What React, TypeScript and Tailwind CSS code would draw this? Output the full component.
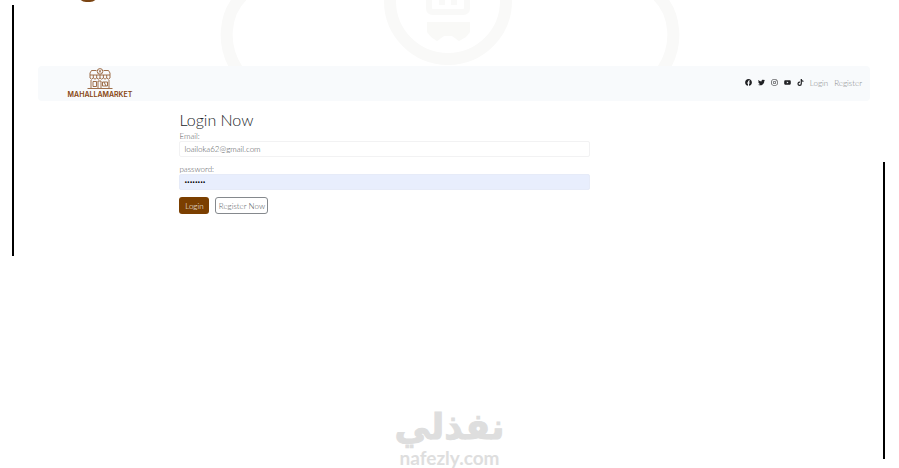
import { useState } from 'react';
import { FaFacebook, FaInstagram, FaTiktok, FaTwitter, FaYoutube } from 'react-icons/fa';

const socials = [
  { name: 'Facebook', icon: FaFacebook },
  { name: 'Twitter', icon: FaTwitter },
  { name: 'Instagram', icon: FaInstagram },
  { name: 'YouTube', icon: FaYoutube },
  { name: 'TikTok', icon: FaTiktok },
];

function StoreIcon() {
  return (
    <svg viewBox="0 0 26 22" className="h-[22px] w-[26px]" fill="none" stroke="#946038" strokeWidth="0.9">
      <path d="M9.5 2.5H4.5L3 5V7M16.5 2.5h5L23 5V7M3 7h20M3 7v3q1.6 2.4 3.3 0q1.7 2.4 3.4 0q1.6 2.4 3.3 0q1.7 2.4 3.4 0q1.6 2.4 3.3 0q1.7 2.4 3.3 0V7M6.3 7v3M9.7 7v3M13 7v3M16.4 7v3M19.7 7v3" />
      <circle cx="13" cy="3.4" r="2.8" />
      <path d="M12 2.2l2 2.4M14 2.2l-2 2.4" />
      <path d="M4 12v8M22 12v8M6 13.5h3.5v5H6zM11 20v-7h3v7M15.5 14h5v4h-5zM17 14l2 4M0.5 20.5h25" />
    </svg>
  );
}

function Backdrop() {
  return (
    <svg viewBox="0 0 460 66" className="h-[66px] w-[460px]" fill="none" stroke="#f9f9f8" aria-hidden="true">
      <path d="M24 -6C4 12 0 46 19 72M436 -6C456 12 460 46 441 72" strokeWidth="12" />
      <circle cx="228" cy="1" r="58" strokeWidth="12" />
      <path d="M209 -4V8q0 4 4 4h30q4 0 4-4V-4M222 -4v9M234 -4v9" strokeWidth="6" />
      <path d="M207 22h43v10l-4 5-7 4-7-5h-8l-7 5-6-4-4-5z" fill="#f9f9f7" stroke="none" />
    </svg>
  );
}

function Navbar() {
  return (
    <header className="flex h-[35px] items-center justify-between rounded bg-[#f8fafc] pr-2 pl-7">
      <a href="#" className="flex w-[68px] flex-col items-center">
        <StoreIcon />
        <span className="font-['Inter'] text-[7px] leading-[10px] font-semibold text-[#87450f]">MAHALLAMARKET</span>
      </a>
      <nav className="flex items-center gap-[6px] pb-[2px] text-[8px] text-[#85878a]">
        {socials.map(({ name, icon: Icon }) => (
          <a key={name} href="#" aria-label={name} className="flex w-[7px] justify-center text-[#202124]">
            <Icon className="size-[7px] shrink-0" />
          </a>
        ))}
        <a href="#">Login</a>
        <a href="#">Register</a>
      </nav>
    </header>
  );
}

function LoginForm() {
  const [email, setEmail] = useState('loailoka62@gmail.com');
  const [password, setPassword] = useState('password');

  return (
    <form className="mt-2 ml-[17%] w-1/2 max-w-[411px]" onSubmit={(e) => e.preventDefault()}>
      <h1 className="text-[16px] leading-[22px] text-[#212529]">Login Now</h1>
      <label htmlFor="email" className="block text-[8px] leading-[10px] text-[#55585b]">Email:</label>
      <input
        id="email"
        type="email"
        value={email}
        onChange={(e) => setEmail(e.target.value)}
        className="block h-4 w-full rounded-[2px] border border-[#f2f2f3] bg-white px-1 text-[8px] text-[#4b4e51] outline-none"
      />
      <label htmlFor="password" className="mt-[7px] block text-[8px] leading-[10px] text-[#55585b]">password:</label>
      <input
        id="password"
        type="password"
        value={password}
        onChange={(e) => setPassword(e.target.value)}
        className="block h-4 w-full rounded-[2px] border border-[#e6ebf8] bg-[#e8eefd] px-1 font-['Open_Sans'] text-[7px] font-normal text-black outline-none"
      />
      <div className="mt-[7px] flex gap-[6px] text-[8px]">
        <button type="submit" className="h-[17px] w-[30px] rounded-[3px] bg-[#7b3f00] text-white">Login</button>
        <button type="button" className="h-[17px] w-[53px] rounded-[3px] border border-[#85898d] whitespace-nowrap text-[#54595e]">
          Register Now
        </button>
      </div>
    </form>
  );
}

function Watermark() {
  return (
    <div className="absolute top-[406px] left-1/2 flex -translate-x-1/2 flex-col items-center text-[#dedede]">
      <span dir="rtl" lang="ar" className="font-['DejaVu_Sans'] text-[36px] leading-[42px] font-bold [-webkit-text-stroke:1px_#dedede]">
        نفذلي
      </span>
      <span className="font-['Lato'] text-[19px] leading-5 font-bold">nafezly.com</span>
    </div>
  );
}

export default function App() {
  return (
    <div className="relative flex min-h-screen items-start overflow-hidden bg-white font-['Lato',sans-serif] font-light">
      <div className="mt-[5px] ml-3 h-[251px] w-[2px] shrink-0 bg-black" />
      <main className="mr-[13px] ml-6 min-w-0 flex-1">
        <div className="relative flex h-[66px] justify-center overflow-hidden pr-2">
          <div className="absolute -top-[14px] left-10 h-4 w-5 rounded-full bg-[#7b4513]" />
          <Backdrop />
        </div>
        <Navbar />
        <LoginForm />
      </main>
      <div className="mt-[162px] mr-[14px] h-[297px] w-[2px] shrink-0 bg-black" />
      <Watermark />
    </div>
  );
}
